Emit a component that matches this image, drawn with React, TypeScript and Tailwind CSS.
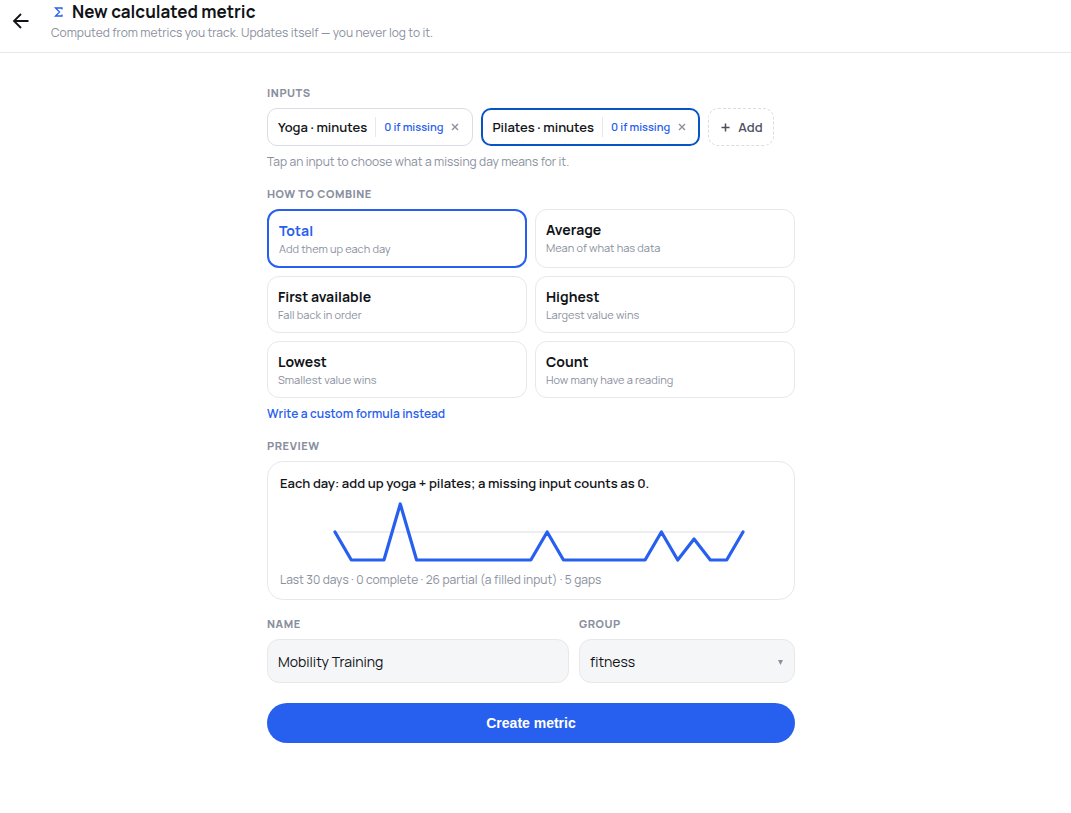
import { useState } from 'react'

const INPUTS = [
  { name: 'Yoga · minutes', missing: '0 if missing' },
  { name: 'Pilates · minutes', missing: '0 if missing' },
]

const MODES = [
  { id: 'total', title: 'Total', hint: 'Add them up each day' },
  { id: 'average', title: 'Average', hint: 'Mean of what has data' },
  { id: 'first', title: 'First available', hint: 'Fall back in order' },
  { id: 'highest', title: 'Highest', hint: 'Largest value wins' },
  { id: 'lowest', title: 'Lowest', hint: 'Smallest value wins' },
  { id: 'count', title: 'Count', hint: 'How many have a reading' },
]

const VALUES = [20, 0, 0, 0, 40, 0, 0, 0, 0, 0, 0, 0, 0, 20, 0, 0, 0, 0, 0, 0, 20, 0, 15, 0, 0, 20]

function SectionLabel({ children }: { children: React.ReactNode }) {
  return (
    <span className="block text-[11px] leading-4 font-extrabold uppercase tracking-wider text-[#8a909e]">
      {children}
    </span>
  )
}

function Sparkline({ values }: { values: number[] }) {
  const max = Math.max(...values)
  const step = 408 / (values.length - 1)
  const points = values.map((v, i) => `${55 + i * step},${60 - (v / max) * 56}`).join(' ')

  return (
    <svg viewBox="0 0 502 64" className="block w-full" aria-hidden="true">
      <line x1="55" x2="463" y1="32" y2="32" stroke="#e8e9eb" strokeWidth="1.6" />
      <polyline
        points={points}
        fill="none"
        stroke="#2760ee"
        strokeWidth="3.2"
        strokeLinecap="round"
        strokeLinejoin="round"
      />
    </svg>
  )
}

export default function App() {
  const [selected, setSelected] = useState(1)
  const [mode, setMode] = useState('total')
  const [name, setName] = useState('Mobility Training')

  return (
    <div className="min-h-screen bg-white font-['Manrope','Inter',sans-serif] text-[#111317]">
      {/* Header */}
      <header className="flex items-center border-b border-[#e6e8ec] px-3 pb-[11px]">
        <button type="button" aria-label="Back" className="mr-[21px] shrink-0">
          <svg width="18" height="18" viewBox="0 0 18 18" fill="none" stroke="currentColor" strokeWidth="1.8">
            <path d="M16.5 9H2.5M9 2L2 9l7 7" />
          </svg>
        </button>
        <div className="min-w-0">
          <h1 className="flex items-center gap-2 text-[17px] leading-6 font-bold">
            <svg width="13" height="12" viewBox="0 0 13 12" fill="none" stroke="#2760ee" strokeWidth="1.3" aria-hidden="true">
              <path d="M11 3.5V2H4.5l4 4-4 4H11V8.5" />
            </svg>
            New calculated metric
          </h1>
          <p className="mt-px text-xs leading-4 text-[#8a909e]">
            Computed from metrics you track. Updates itself — you never log to it.
          </p>
        </div>
      </header>

      <main className="pr-[9px]">
        <form className="mx-auto max-w-[560px] px-4 py-8" onSubmit={(e) => e.preventDefault()}>
          {/* Inputs */}
          <h2>
            <SectionLabel>Inputs</SectionLabel>
          </h2>
          <div className="mt-[7px] flex flex-wrap gap-2">
            {INPUTS.map((input, i) => (
              <div
                key={input.name}
                className={
                  selected === i
                    ? 'flex h-[38px] items-center rounded-[10px] border-2 border-[#0754c5] px-[9px]'
                    : 'flex h-[38px] items-center rounded-[10px] border border-[#dadce4] px-[10px]'
                }
              >
                <button type="button" className="flex items-center" onClick={() => setSelected(i)}>
                  <span className="text-[13px] leading-5 font-semibold">{input.name}</span>
                  <span className="ml-2 border-l border-[#e6e8ec] pl-2 text-[11px] leading-5 font-semibold text-[#2760ee]">
                    {input.missing}
                  </span>
                </button>
                <button type="button" aria-label={`Remove ${input.name}`} className="ml-2 pr-[3px] text-[#8a909e]">
                  <svg width="8" height="8" viewBox="0 0 8 8" fill="none" stroke="currentColor" strokeWidth="1.4">
                    <path d="M1 1l6 6M7 1L1 7" />
                  </svg>
                </button>
              </div>
            ))}
            <button
              type="button"
              className="flex h-[38px] items-center gap-1.5 rounded-[10px] border border-dashed border-[#dadce4] px-[10px] text-[13px] leading-5 font-semibold text-[#4b505c]"
            >
              <svg width="13" height="13" viewBox="0 0 13 13" stroke="currentColor" strokeWidth="1.5" aria-hidden="true">
                <path d="M6.5 2.5v8M2.5 6.5h8" />
              </svg>
              Add
            </button>
          </div>
          <p className="mt-2 text-xs leading-4 text-[#8a909e]">
            Tap an input to choose what a missing day means for it.
          </p>

          {/* Combine mode */}
          <h2 className="mt-4">
            <SectionLabel>How to combine</SectionLabel>
          </h2>
          <div className="mt-[7px] grid grid-cols-2 gap-2">
            {MODES.map((m) => (
              <button
                key={m.id}
                type="button"
                aria-pressed={mode === m.id}
                onClick={() => setMode(m.id)}
                className={
                  mode === m.id
                    ? 'rounded-xl border-2 border-[#2760ee] p-[10px] text-left'
                    : 'flex flex-col rounded-xl border border-[#e6e8ec] p-[10px] text-left'
                }
              >
                <span
                  className={
                    mode === m.id
                      ? 'block text-sm leading-5 font-bold text-[#2760ee]'
                      : 'block text-sm leading-5 font-bold'
                  }
                >
                  {m.title}
                </span>
                <span className="block text-[11px] leading-[15px] text-[#8a909e]">{m.hint}</span>
              </button>
            ))}
          </div>
          <button type="button" className="mt-2 block text-xs leading-4 font-semibold text-[#2760ee]">
            Write a custom formula instead
          </button>

          {/* Preview */}
          <h2 className="mt-4">
            <SectionLabel>Preview</SectionLabel>
          </h2>
          <div className="mt-[7px] rounded-2xl border border-[#e6e8ec] p-3">
            <p className="text-[13px] leading-[18px] font-semibold">
              Each day: add up yoga + pilates; a missing input counts as 0.
            </p>
            <div className="my-2">
              <Sparkline values={VALUES} />
            </div>
            <p className="text-xs leading-[15px] text-[#8a909e]">
              Last 30 days · 0 complete · 26 partial (a filled input) · 5 gaps
            </p>
          </div>

          {/* Name and group */}
          <div className="mt-4 flex gap-[10px]">
            <label className="min-w-0 flex-1">
              <SectionLabel>Name</SectionLabel>
              <input
                type="text"
                value={name}
                onChange={(e) => setName(e.target.value)}
                className="mt-[7px] block h-11 w-full rounded-xl border border-[#e6e8ec] bg-[#f5f6f8] px-[10px] text-sm"
              />
            </label>
            <label className="w-[216px]">
              <SectionLabel>Group</SectionLabel>
              <span className="relative mt-[7px] block">
                <select className="block h-11 w-full appearance-none rounded-xl border border-[#e6e8ec] bg-[#f5f6f8] px-[10px] pt-0.5 text-sm">
                  <option>fitness</option>
                </select>
                <svg width="5" height="5" viewBox="0 0 5 5" className="pointer-events-none absolute top-[21px] right-3" aria-hidden="true">
                  <path d="M0 0h5L2.5 5z" fill="#8a909e" />
                </svg>
              </span>
            </label>
          </div>

          <button
            type="submit"
            className="mt-5 h-10 w-full rounded-full bg-[#2760ee] font-['Liberation_Sans',Arial,sans-serif] text-sm font-bold text-white"
          >
            Create metric
          </button>
        </form>
      </main>
    </div>
  )
}
